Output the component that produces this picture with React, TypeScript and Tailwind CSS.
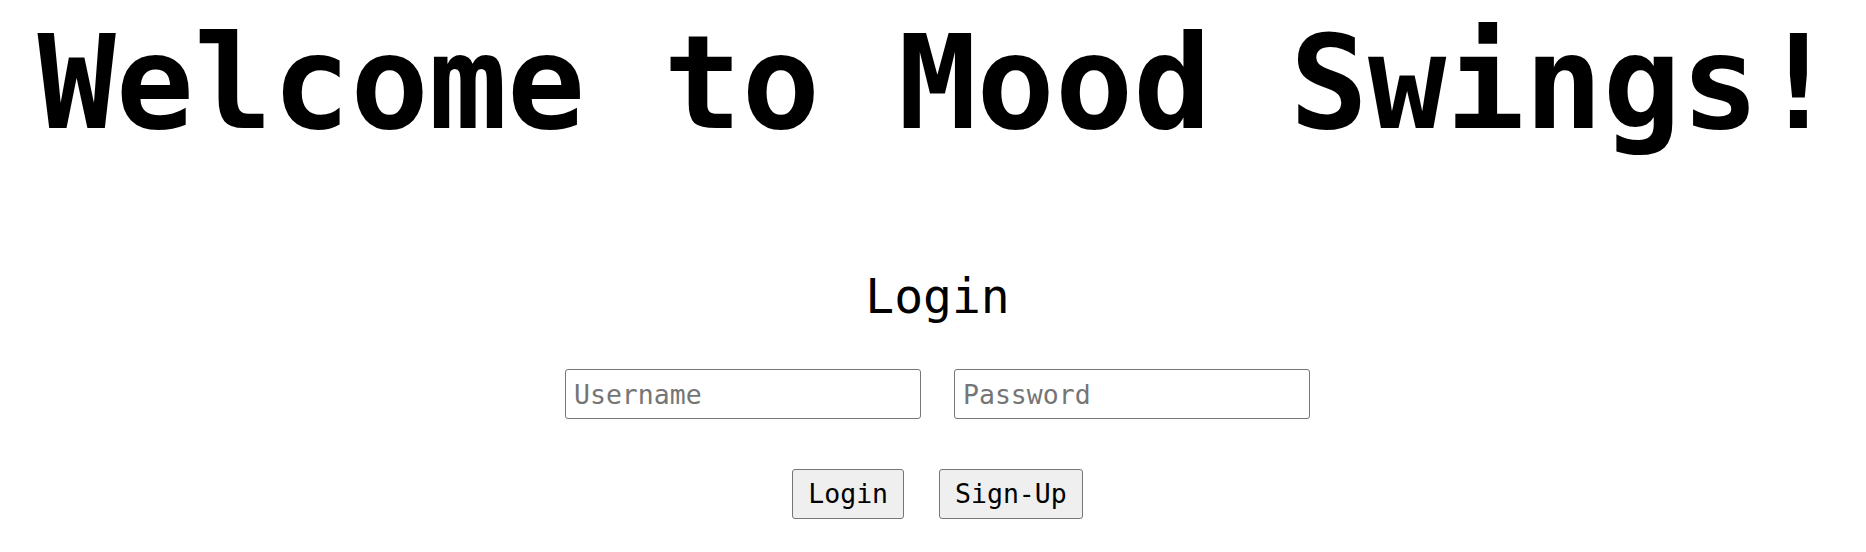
export default function App() {
  return (
    <div className="min-h-[552px] bg-white text-black font-['DejaVu_Sans_Mono','Liberation_Mono',monospace]">
      <div className="flex flex-col items-center pt-[18px] pl-[9px]">
        <h1 className="text-[130px] leading-none font-bold whitespace-nowrap">Welcome to Mood Swings!</h1>

        <h2 className="mt-[124px] text-[48px] leading-none font-normal">Login</h2>

        <form className="mt-[49px] flex flex-col items-center" onSubmit={(e) => e.preventDefault()}>
          <div className="flex gap-[33px]">
            <input
              type="text"
              placeholder="Username"
              className="h-[50px] w-[356px] rounded-[3px] border border-[#767676] bg-white px-2 text-[26.5px] text-black placeholder:text-[#757575] outline-none"
            />
            <input
              type="password"
              placeholder="Password"
              className="h-[50px] w-[356px] rounded-[3px] border border-[#767676] bg-white px-2 text-[26.5px] text-black placeholder:text-[#757575] outline-none"
            />
          </div>

          <div className="mt-[50px] flex gap-[35px]">
            <button
              type="submit"
              className="h-[50px] rounded-[3px] border border-[#767676] bg-[#efefef] px-[15px] text-[26.5px] text-black"
            >
              Login
            </button>
            <button
              type="button"
              className="h-[50px] rounded-[3px] border border-[#767676] bg-[#efefef] px-[15px] text-[26.5px] text-black"
            >
              Sign-Up
            </button>
          </div>
        </form>
      </div>
    </div>
  )
}
